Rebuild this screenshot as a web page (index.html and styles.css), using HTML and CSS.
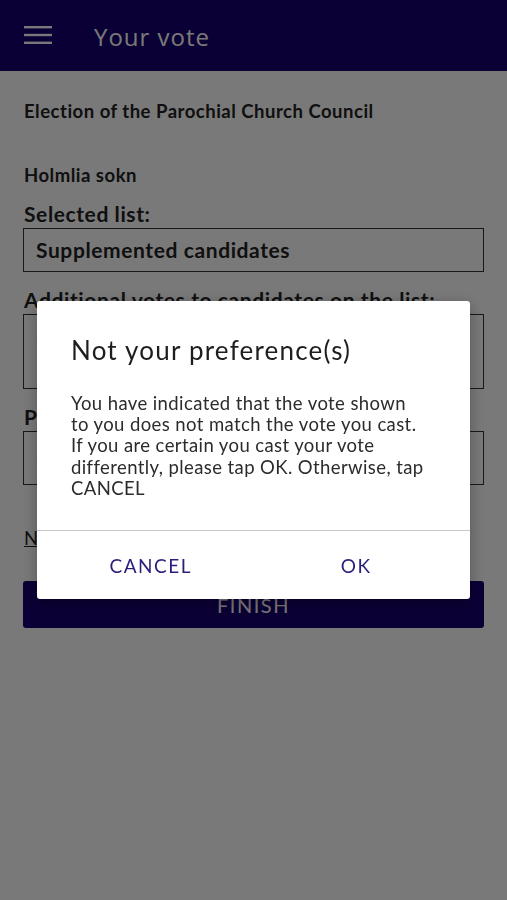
FILE: index.html
```html
<!DOCTYPE html>
<html lang="en">
<head>
    <meta charset="UTF-8">
    <meta name="viewport" content="width=device-width, initial-scale=1.0">
    <title>Your vote</title>
    <link rel="stylesheet" href="styles.css">
</head>
<body>

    <header class="appbar">
        <button class="menu" aria-label="Menu">
            <svg width="28" height="18" viewBox="0 0 28 18">
                <rect x="0" y="0" width="28" height="2.4" fill="currentColor"/>
                <rect x="0" y="7.8" width="28" height="2.4" fill="currentColor"/>
                <rect x="0" y="15.6" width="28" height="2.4" fill="currentColor"/>
            </svg>
        </button>
        <h1 class="appbar-title">Your vote</h1>
    </header>

    <main class="content">
        <p class="election">Election of the Parochial Church Council</p>
        <p class="parish">Holmlia sokn</p>

        <h2 class="label">Selected list:</h2>
        <div class="field">Supplemented candidates</div>

        <h2 class="label">Additional votes to candidates on the list:</h2>
        <div class="field field-tall"><span class="dash">-</span></div>

        <h2 class="label">Personal votes:</h2>
        <div class="field field-mid"><span class="dash">-</span></div>

        <a class="link" href="#">Not your preference(s)?</a>

        <button class="finish">FINISH</button>
    </main>

    <div class="overlay">
        <div class="dialog">
            <h3 class="dialog-title">Not your preference(s)</h3>
            <p class="dialog-text">You have indicated that the vote shown to you does not match the vote you cast. If you are certain you cast your vote differently, please tap OK. Otherwise, tap CANCEL</p>
            <div class="dialog-actions">
                <button class="action">CANCEL</button>
                <button class="action">OK</button>
            </div>
        </div>
    </div>

</body>
</html>
```

FILE: styles.css
```css
* {
    box-sizing: border-box;
}
body {
    margin: 0;
    background-color: #fff;
    color: #222;
    font-family: Lato, "Open Sans", sans-serif;
    min-height: 900px;
}
.appbar {
    height: 71px;
    background-color: #170070;
    color: #fff;
    display: flex;
    align-items: center;
    padding-left: 24px;
}
.menu {
    background: none;
    border: none;
    padding: 0;
    color: #fff;
    display: flex;
    margin-top: -2px;
}
.appbar-title {
    margin: 2px 0 0 42px;
    font-family: "Open Sans", sans-serif;
    font-weight: 400;
    font-size: 24px;
    letter-spacing: 1px;
}
.content {
    padding: 0 23px;
    display: flex;
    flex-direction: column;
}
.election {
    margin: 29px 0 0 1px;
    font-size: 18.5px;
    letter-spacing: 0.5px;
    font-weight: 700;
    line-height: 22px;
}
.parish {
    margin: 42px 0 0 1px;
    font-size: 18.5px;
    letter-spacing: 0.5px;
    font-weight: 700;
    line-height: 22px;
}
.label {
    margin: 15px 0 1px 1px;
    font-size: 21px;
    letter-spacing: 0.6px;
    font-weight: 700;
    line-height: 26px;
}
.field {
    height: 44px;
    border: 1.5px solid #333;
    padding: 0 12px;
    font-size: 21px;
    letter-spacing: 0.6px;
    font-weight: 700;
    line-height: 41px;
}
.field-tall {
    height: 75px;
}
.field-mid {
    height: 54px;
}
.dash {
    font-weight: 400;
    font-size: 14px;
}
.link {
    margin: 42px 0 0 1px;
    color: #222;
    font-size: 18.5px;
    letter-spacing: 0.5px;
    line-height: 22px;
    align-self: flex-start;
}
.finish {
    margin-top: 32px;
    height: 47px;
    border: none;
    border-radius: 3px;
    background-color: #170070;
    color: #fff;
    font-family: Lato, sans-serif;
    font-size: 20px;
    letter-spacing: 1.5px;
}
.overlay {
    position: fixed;
    inset: 0;
    background-color: rgba(0, 0, 0, 0.525);
}
.dialog {
    position: absolute;
    left: 37px;
    top: 301px;
    width: 433px;
    background-color: #fff;
    border-radius: 3px;
    box-shadow: 0 4px 16px rgba(0, 0, 0, 0.3);
}
.dialog-title {
    margin: 0;
    padding: 34px 34px 0;
    font-size: 26px;
    letter-spacing: 1.2px;
    font-weight: 400;
    line-height: 30px;
    color: #1e1e1e;
}
.dialog-text {
    margin: 0;
    padding: 28px 45px 31px 34px;
    font-size: 18.5px;
    letter-spacing: 0.4px;
    line-height: 21.2px;
    color: #2c2c2c;
}
.dialog-actions {
    border-top: 1px solid #c8c8c8;
    display: grid;
    grid-template-columns: 1fr 1fr;
    padding: 0 11px;
    height: 69px;
}
.action {
    background: none;
    border: none;
    font-family: Lato, sans-serif;
    font-size: 19px;
    letter-spacing: 1.5px;
    color: #2a1f78;
}
```
